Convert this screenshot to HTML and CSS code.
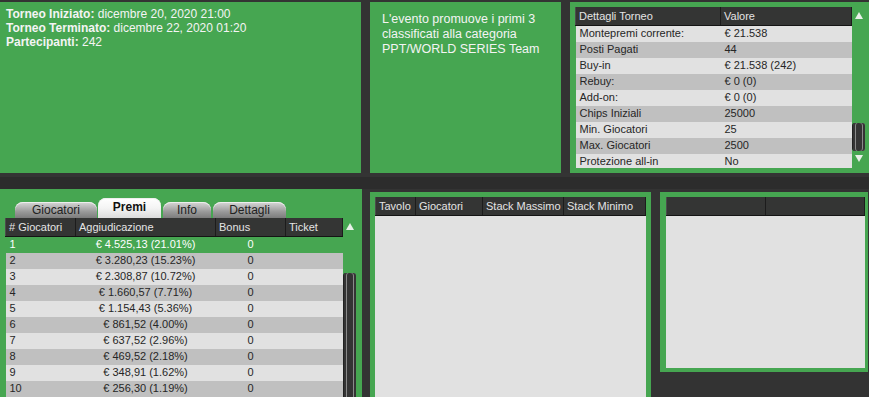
FILE: index.html
```html
<!DOCTYPE html>
<html lang="it">
<head>
  <meta charset="UTF-8">
  <title>Dettagli Torneo</title>
  <link rel="stylesheet" href="styles.css">
</head>
<body>

  <div class="top">
    <section class="panel info">
      <div><b>Torneo Iniziato:</b> dicembre 20, 2020 21:00</div>
      <div><b>Torneo Terminato:</b> dicembre 22, 2020 01:20</div>
      <div><b>Partecipanti:</b> 242</div>
    </section>

    <section class="panel promo">
      <p>L'evento promuove i primi 3 classificati alla categoria PPT/WORLD SERIES Team</p>
    </section>

    <section class="panel details">
      <div class="scrollview">
        <table class="grid">
          <colgroup><col style="width:145px"><col></colgroup>
          <thead>
            <tr><th>Dettagli Torneo</th><th>Valore</th></tr>
          </thead>
          <tbody>
            <tr><td>Montepremi corrente:</td><td>€ 21.538</td></tr>
            <tr><td>Posti Pagati</td><td>44</td></tr>
            <tr><td>Buy-in</td><td>€ 21.538 (242)</td></tr>
            <tr><td>Rebuy:</td><td>€ 0 (0)</td></tr>
            <tr><td>Add-on:</td><td>€ 0 (0)</td></tr>
            <tr><td>Chips Iniziali</td><td>25000</td></tr>
            <tr><td>Min. Giocatori</td><td>25</td></tr>
            <tr><td>Max. Giocatori</td><td>2500</td></tr>
            <tr><td>Protezione all-in</td><td>No</td></tr>
          </tbody>
        </table>
        <div class="vscroll">
          <span class="arrow up"></span>
          <span class="thumb short"></span>
          <span class="arrow down"></span>
        </div>
      </div>
    </section>
  </div>

  <div class="band"></div>

  <div class="bottom">
    <section class="panel prizes">
      <nav class="tabs">
        <span class="tab">Giocatori</span>
        <span class="tab active">Premi</span>
        <span class="tab">Info</span>
        <span class="tab">Dettagli</span>
      </nav>
      <div class="scrollview">
        <table class="grid">
          <colgroup>
            <col style="width:70px"><col style="width:140px"><col style="width:70px"><col>
          </colgroup>
          <thead>
            <tr><th># Giocatori</th><th>Aggiudicazione</th><th>Bonus</th><th>Ticket</th></tr>
          </thead>
          <tbody>
            <tr class="selected"><td>1</td><td class="c">€ 4.525,13 (21.01%)</td><td class="c">0</td><td></td></tr>
            <tr><td>2</td><td class="c">€ 3.280,23 (15.23%)</td><td class="c">0</td><td></td></tr>
            <tr><td>3</td><td class="c">€ 2.308,87 (10.72%)</td><td class="c">0</td><td></td></tr>
            <tr><td>4</td><td class="c">€ 1.660,57 (7.71%)</td><td class="c">0</td><td></td></tr>
            <tr><td>5</td><td class="c">€ 1.154,43 (5.36%)</td><td class="c">0</td><td></td></tr>
            <tr><td>6</td><td class="c">€ 861,52 (4.00%)</td><td class="c">0</td><td></td></tr>
            <tr><td>7</td><td class="c">€ 637,52 (2.96%)</td><td class="c">0</td><td></td></tr>
            <tr><td>8</td><td class="c">€ 469,52 (2.18%)</td><td class="c">0</td><td></td></tr>
            <tr><td>9</td><td class="c">€ 348,91 (1.62%)</td><td class="c">0</td><td></td></tr>
            <tr><td>10</td><td class="c">€ 256,30 (1.19%)</td><td class="c">0</td><td></td></tr>
          </tbody>
        </table>
        <div class="vscroll">
          <span class="arrow up"></span>
          <span class="thumb long"></span>
        </div>
      </div>
    </section>

    <section class="panel tables">
      <table class="grid">
        <colgroup>
          <col style="width:40px"><col style="width:67px"><col style="width:81px"><col>
        </colgroup>
        <thead>
          <tr><th>Tavolo</th><th>Giocatori</th><th>Stack Massimo</th><th>Stack Minimo</th></tr>
        </thead>
      </table>
    </section>

    <section class="panel extra">
      <table class="grid">
        <thead>
          <tr><th></th><th></th></tr>
        </thead>
      </table>
    </section>
  </div>

</body>
</html>
```

FILE: styles.css
```css
body {
  margin: 0;
  height: 397px;
  overflow: hidden;
  background: #333333;
  font-family: "Liberation Sans", Arial, sans-serif;
  color: #f4f4f4;
}

.panel {
  background: #46a651;
  box-sizing: border-box;
}

/* top row */
.top {
  display: grid;
  grid-template-columns: 361px 191px 299px;
  column-gap: 9px;
  height: 171px;
  padding-top: 2px;
}

.info {
  padding: 5px 6px;
  font-size: 12px;
  line-height: 14px;
}

.promo {
  padding: 10px 12px;
}

.promo p {
  margin: 0;
  font-size: 12.5px;
  line-height: 15px;
  width: 160px;
}

.details {
  padding: 5px 3px 3px 5px;
}

.details .scrollview {
  height: 161px;
}

.band {
  height: 16px;
  border-top: 4px solid #343434;
  box-sizing: border-box;
  background: #2c2c2c;
}

/* bottom row */
.bottom {
  display: grid;
  grid-template-columns: 362px 281px 209px;
  column-gap: 8px;
  align-items: start;
}

.bottom .panel + .panel {
  margin-top: 3px;
}

.bottom .extra {
  margin-left: 1px;
}

.prizes {
  height: 220px;
  padding: 9px 5px 0 5px;
}

.tables {
  height: 220px;
  border: 5px solid #46a651;
  background: #e1e1e1;
}

.extra {
  height: 180px;
  border: 5px solid #46a651;
  border-left-width: 6px;
  border-right-width: 3px;
  border-bottom-width: 4px;
  background: #e1e1e1;
}

/* tabs */
.tabs {
  display: flex;
  align-items: flex-end;
  gap: 1px;
  height: 20px;
  padding-left: 10px;
}

.tab {
  width: 82px;
  height: 16px;
  line-height: 17px;
  text-align: center;
  font-size: 12px;
  color: #222;
  border-radius: 8px 8px 0 0;
  background: linear-gradient(to bottom, #d8d8d8, #9a9a9a 60%, #7c7c7c);
  box-shadow: inset 0 1px 0 #eee;
}

.tab:nth-child(2) { width: 63px; }
.tab:nth-child(3) { width: 48px; margin-left: 1px; }
.tab:nth-child(4) { width: 73px; margin-left: 1px; }

.tab.active {
  height: 20px;
  line-height: 18px;
  font-weight: bold;
  color: #111;
  background: linear-gradient(to bottom, #ffffff, #f4f4f4 50%, #dcdcdc);
}

/* grids */
.scrollview {
  display: flex;
  overflow: hidden;
}

.grid {
  border-collapse: collapse;
  table-layout: fixed;
  font-size: 11px;
  flex: 1;
  width: 100%;
}

.grid th {
  height: 18px;
  padding: 0 3px;
  text-align: left;
  font-weight: normal;
  color: #e4e4e4;
  background: #343534;
  border-left: 1px solid #4c4c4c;
  border-right: 1px solid #1c1c1c;
  border-bottom: 1px solid #141414;
  white-space: nowrap;
  overflow: hidden;
}

.grid td {
  height: 14px;
  line-height: 14px;
  padding: 0 4px 2px;
  color: #262626;
  background: #e1e1e1;
  white-space: nowrap;
}

.grid tbody tr:nth-child(even) td {
  background: #c0c0c0;
}

.grid tr.selected td {
  background: transparent;
  color: #ffffff;
}

.grid td.c {
  text-align: center;
}

.prizes .grid {
  width: 338px;
}

/* scrollbars */
.vscroll {
  position: relative;
  width: 14px;
  flex: none;
}

.arrow {
  position: absolute;
  left: 3px;
  width: 0;
  height: 0;
  border-left: 4px solid transparent;
  border-right: 4px solid transparent;
}

.arrow.up {
  top: 5px;
  border-bottom: 7px solid #e8f0e8;
}

.arrow.down {
  bottom: 6px;
  border-top: 7px solid #e8f0e8;
}

.thumb {
  position: absolute;
  left: 0;
  width: 12px;
  background: #343434;
  border-left: 1px solid #222;
  box-shadow: inset 2px 0 0 #343434, inset 3px 0 0 #8a8a8a, inset -2px 0 0 #343434, inset -3px 0 0 #8a8a8a;
  border-radius: 3px 3px 0 0;
}

.thumb.short {
  top: 116px;
  height: 28px;
  border-radius: 3px;
}

.thumb.long {
  top: 55px;
  height: 200px;
}
```
